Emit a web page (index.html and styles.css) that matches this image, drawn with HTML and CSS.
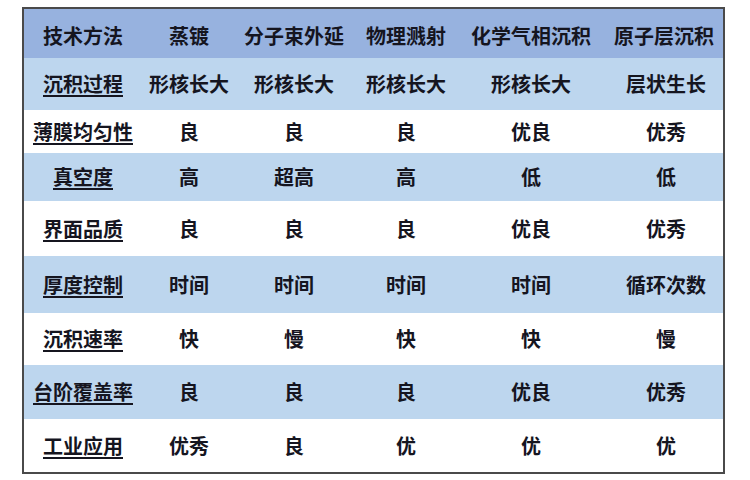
FILE: index.html
```html
<!DOCTYPE html>
<html lang="zh">
<head>
<meta charset="utf-8">
<link rel="stylesheet" href="styles.css">
<title>薄膜沉积技术对比</title>
</head>
<body>
<div class="frame">
<table class="cmp">
  <colgroup>
    <col class="c1"><col class="c2"><col class="c3"><col class="c4"><col class="c5"><col class="c6">
  </colgroup>
  <thead>
    <tr class="head">
      <th>技术方法</th><th>蒸镀</th><th>分子束外延</th><th>物理溅射</th><th>化学气相沉积</th><th>原子层沉积</th>
    </tr>
  </thead>
  <tbody>
    <tr class="blue r1"><td class="lbl"><u>沉积过程</u></td><td>形核长大</td><td>形核长大</td><td>形核长大</td><td>形核长大</td><td>层状生长</td></tr>
    <tr class="white r2"><td class="lbl"><u>薄膜均匀性</u></td><td>良</td><td>良</td><td>良</td><td>优良</td><td>优秀</td></tr>
    <tr class="blue r3"><td class="lbl"><u>真空度</u></td><td>高</td><td>超高</td><td>高</td><td>低</td><td>低</td></tr>
    <tr class="white r4"><td class="lbl"><u>界面品质</u></td><td>良</td><td>良</td><td>良</td><td>优良</td><td>优秀</td></tr>
    <tr class="blue r5"><td class="lbl"><u>厚度控制</u></td><td>时间</td><td>时间</td><td>时间</td><td>时间</td><td>循环次数</td></tr>
    <tr class="white r6"><td class="lbl"><u>沉积速率</u></td><td>快</td><td>慢</td><td>快</td><td>快</td><td>慢</td></tr>
    <tr class="blue r7"><td class="lbl"><u>台阶覆盖率</u></td><td>良</td><td>良</td><td>良</td><td>优良</td><td>优秀</td></tr>
    <tr class="white r8"><td class="lbl"><u>工业应用</u></td><td>优秀</td><td>良</td><td>优</td><td>优</td><td>优</td></tr>
  </tbody>
</table>
</div>
</body>
</html>
```
FILE: styles.css
```css
html, body {
  margin: 0;
  padding: 0;
  background: #ffffff;
}

body {
  font-family: "Noto Sans CJK SC", "Noto Sans", sans-serif;
  color: #15151f;
}

.frame {
  margin: 7px 0 0 22px;
  width: 699px;
  border: 2px solid #4a4a4a;
}

.cmp {
  width: 699px;
  table-layout: fixed;
  border-collapse: collapse;
  border-spacing: 0;
}

.c1 { width: 118px; }
.c2 { width: 94px; }
.c3 { width: 116px; }
.c4 { width: 108px; }
.c5 { width: 142px; }
.c6 { width: 121px; }

.cmp th,
.cmp td {
  padding: 0;
  text-align: center;
  vertical-align: middle;
  font-size: 20px;
  font-weight: 700;
  line-height: 24px;
  white-space: nowrap;
}

.cmp th:last-child,
.cmp td:last-child {
  padding-left: 7px;
}

.head {
  background: #97b2df;
  height: 49px;
}

.head th {
  padding-top: 4px;
}

.head th:last-child {
  padding-left: 3px;
}

.blue { background: #bdd6ee; }
.white { background: #ffffff; }

.r1 { height: 52px; }
.r2 { height: 43px; }
.r3 { height: 48px; }
.r4 { height: 55px; }
.r5 { height: 57px; }
.r6 { height: 52px; }
.r7 { height: 54px; }
.r8 { height: 53px; }

.lbl u {
  text-decoration: underline;
  text-decoration-thickness: 1.5px;
  text-underline-offset: 3px;
}
```
